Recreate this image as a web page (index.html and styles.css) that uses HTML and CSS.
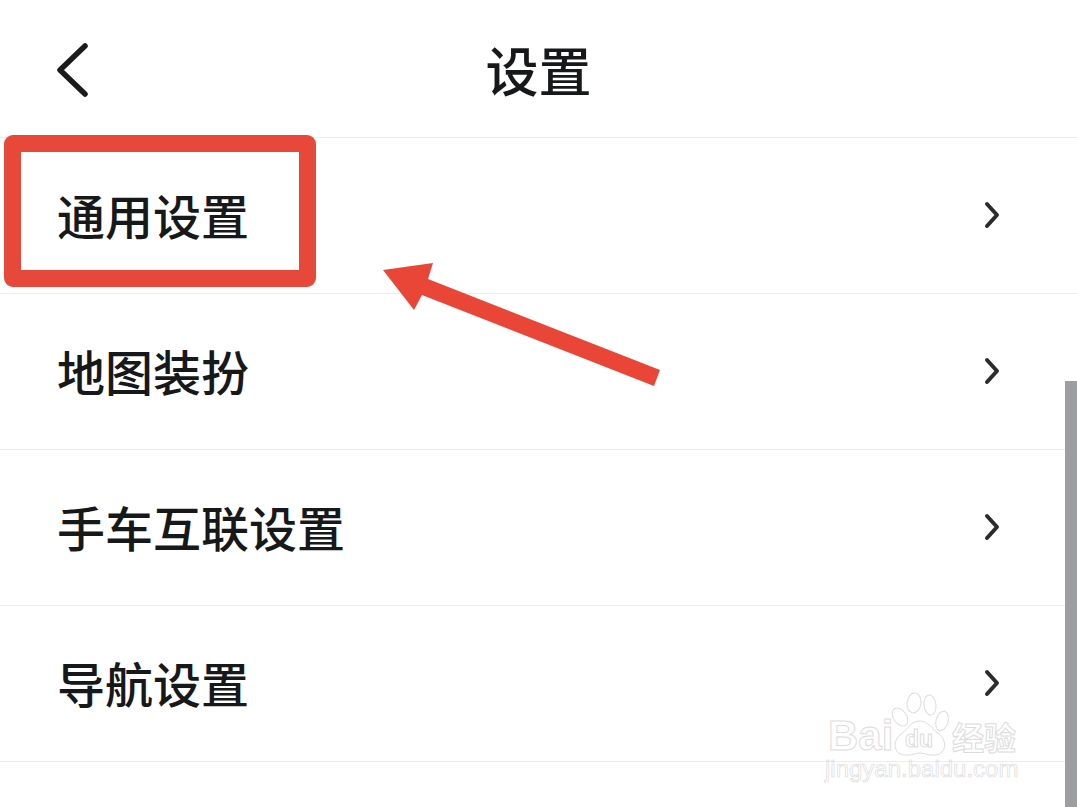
FILE: index.html
```html
<!DOCTYPE html>
<html lang="zh-CN">
<head>
    <meta charset="UTF-8">
    <meta name="viewport" content="width=device-width, initial-scale=1.0">
    <title>设置</title>
    <link rel="stylesheet" href="styles.css">
</head>
<body>
    <div class="screen">
        <header class="topbar">
            <svg class="back" width="34" height="56" viewBox="0 0 34 56">
                <path d="M29 4 L4 28 L29 52" />
            </svg>
            <h1>设置</h1>
        </header>

        <ul class="menu">
            <li><span>通用设置</span><svg class="chevron" width="16" height="28" viewBox="0 0 16 28"><path d="M3 3 L13 14 L3 25" /></svg></li>
            <li><span>地图装扮</span><svg class="chevron" width="16" height="28" viewBox="0 0 16 28"><path d="M3 3 L13 14 L3 25" /></svg></li>
            <li><span>手车互联设置</span><svg class="chevron" width="16" height="28" viewBox="0 0 16 28"><path d="M3 3 L13 14 L3 25" /></svg></li>
            <li><span>导航设置</span><svg class="chevron" width="16" height="28" viewBox="0 0 16 28"><path d="M3 3 L13 14 L3 25" /></svg></li>
        </ul>

        <!-- Annotations on top of the screenshot -->
        <div class="highlight"></div>
        <svg class="arrow" width="290" height="130" viewBox="0 0 290 130">
            <polygon points="3,30 53,23 48,39 280,130 274,146 42,55 34,70" />
        </svg>

        <div class="scrollbar"></div>

        <div class="watermark">
            <div class="wm-logo">
                <span class="wm-bai">Bai</span>
                <svg class="wm-paw" width="60" height="66" viewBox="0 0 60 66">
                    <ellipse cx="23" cy="11" rx="7" ry="10" transform="rotate(8 23 11)" />
                    <ellipse cx="39" cy="13" rx="6" ry="10" transform="rotate(-6 39 13)" />
                    <ellipse cx="9" cy="25" rx="6.5" ry="10" transform="rotate(-35 9 25)" />
                    <ellipse cx="51" cy="29" rx="6" ry="10" transform="rotate(15 51 29)" />
                    <path d="M29 29 C37 29 41 37 48 42 C56 48 56 62 44 63 C38 64 34 61 29 61 C24 61 20 64 13 63 C3 62 1 50 9 43 C17 37 20 29 29 29 Z" />
                </svg>
                <span class="wm-du">du</span>
                <span class="wm-cn">经验</span>
            </div>
            <div class="wm-url">jingyan.baidu.com</div>
        </div>
    </div>
</body>
</html>
```

FILE: styles.css
```css
* {
    box-sizing: border-box;
}
html, body {
    margin: 0;
    padding: 0;
}
body {
    background-color: #fff;
    font-family: "Noto Sans CJK SC", "Liberation Sans", sans-serif;
    color: #17181a;
}
.screen {
    position: relative;
    width: 1077px;
    height: 807px;
    overflow: hidden;
}
.topbar {
    height: 138px;
    padding-left: 56px;
    padding-top: 3px;
    display: flex;
    align-items: center;
    position: relative;
    border-bottom: 1px solid #ececec;
}
.topbar h1 {
    margin: 0;
    position: absolute;
    left: 0;
    right: 0;
    top: 33px;
    text-align: center;
    font-size: 53px;
    line-height: 72px;
    font-weight: 500;
}
.back path {
    fill: none;
    stroke: #1a1b1d;
    stroke-width: 5.5;
    stroke-linecap: round;
    stroke-linejoin: round;
}
.menu {
    list-style: none;
    margin: 0;
    padding: 0;
}
.menu li {
    height: 156px;
    padding: 0 77px 4px 57px;
    display: flex;
    align-items: center;
    justify-content: space-between;
    border-bottom: 1px solid #ececec;
    font-size: 48px;
    font-weight: 500;
}
.chevron {
    margin-top: 2px;
}
.chevron path {
    fill: none;
    stroke: #2a2b2d;
    stroke-width: 4;
    stroke-linecap: round;
    stroke-linejoin: round;
}
.highlight {
    position: absolute;
    left: 4px;
    top: 135px;
    width: 312px;
    height: 152px;
    border: 17px solid #e8483a;
    border-radius: 9px;
}
.arrow {
    position: absolute;
    left: 380px;
    top: 240px;
    overflow: visible;
}
.arrow polygon {
    fill: #ea4638;
}
.scrollbar {
    position: absolute;
    right: 0;
    top: 381px;
    width: 12px;
    height: 426px;
    background-color: #9d9ea2;
}
.watermark {
    position: absolute;
    left: 825px;
    top: 690px;
    width: 200px;
}
.wm-logo {
    position: relative;
    height: 72px;
}
.wm-logo span {
    position: absolute;
    font-family: "Liberation Sans", sans-serif;
    color: transparent;
    -webkit-text-stroke: 1px #dcdcdc;
}
.wm-logo .wm-bai {
    left: 3px;
    top: 26px;
    font-size: 42px;
    line-height: 40px;
    font-weight: 700;
}
.wm-paw {
    position: absolute;
    left: 66px;
    top: 2px;
}
.wm-paw ellipse, .wm-paw path {
    fill: #fff;
    stroke: #dcdcdc;
    stroke-width: 1;
}
.wm-logo .wm-du {
    left: 80px;
    top: 37px;
    font-size: 23px;
    line-height: 24px;
    font-weight: 700;
}
.wm-logo .wm-cn {
    left: 127px;
    top: 28px;
    font-family: "Noto Sans CJK SC", sans-serif;
    font-size: 32px;
    line-height: 36px;
    font-weight: 700;
    white-space: nowrap;
}
.wm-url {
    font-family: "Liberation Sans", sans-serif;
    font-size: 24px;
    line-height: 26px;
    margin-top: -6px;
    color: transparent;
    -webkit-text-stroke: 0.7px #dcdcdc;
    white-space: nowrap;
}
```
